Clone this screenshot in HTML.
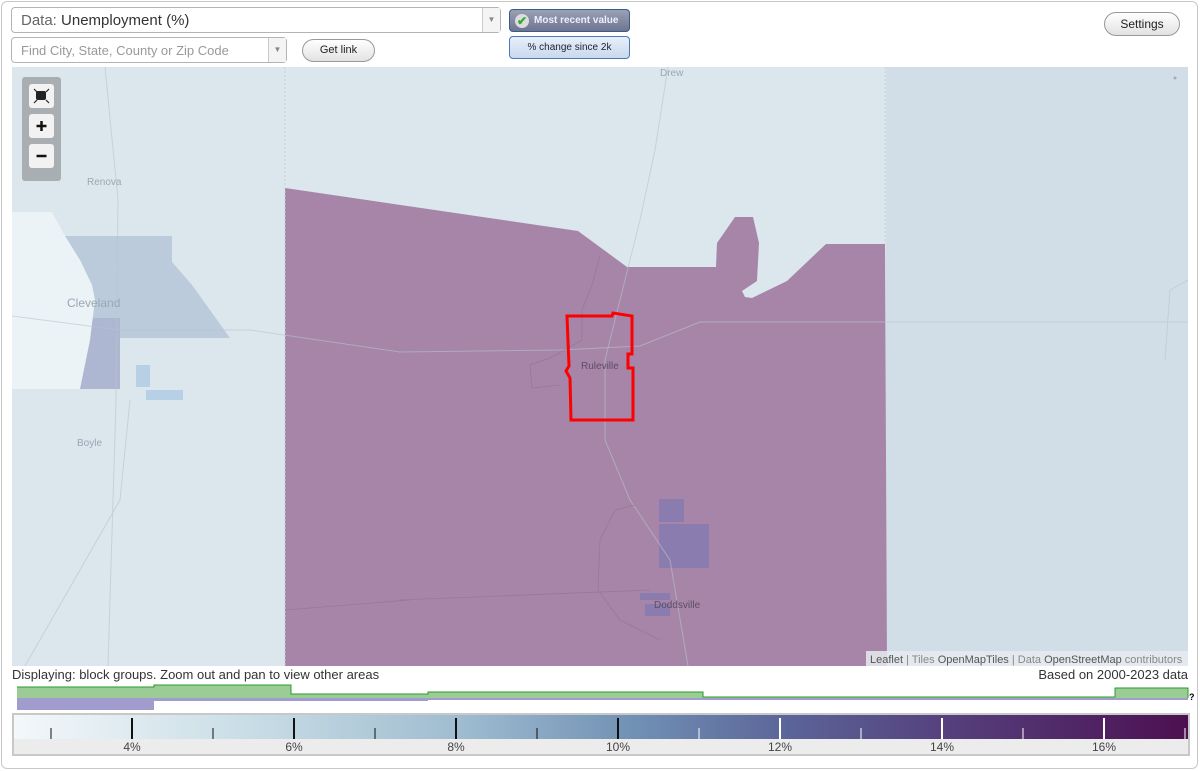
<!DOCTYPE html>
<html><head><meta charset="utf-8"><style>
*{box-sizing:border-box}
body{margin:0;width:1200px;height:771px;overflow:hidden;background:#fff;font-family:"Liberation Sans",Arial,sans-serif;position:relative}
.frame{position:absolute;left:1px;top:1px;width:1197px;height:768px;border:1px solid #c8c8c8;border-radius:6px}
.sel{position:absolute;border:1px solid #b4b4b4;border-radius:4px;background:#fff;color:#333}
.arr{position:absolute;right:0;top:0;bottom:0;width:18px;border-left:1px solid #ccc;background:#f4f4f4;color:#888;font-size:8px;text-align:center}
.btn{position:absolute;border:1px solid #999;border-radius:12px;background:linear-gradient(#fff,#e2e2e2);font-size:11px;color:#222;text-align:center}
.t{position:absolute;white-space:nowrap}
</style></head><body>
<div class="frame"></div>
<div class="sel" style="left:11px;top:7px;width:490px;height:26px;font-size:15px;padding:4px 0 0 9px"><span style="color:#666">Data:</span> Unemployment (%)<div class="arr" style="line-height:24px">▼</div></div>
<div class="sel" style="left:11px;top:37px;width:276px;height:26px;font-size:13px;padding:5px 0 0 9px;color:#999">Find City, State, County or Zip Code<div class="arr" style="line-height:24px">▼</div></div>
<div class="btn" style="left:302px;top:39px;width:73px;height:23px;line-height:21px">Get link</div>
<div style="position:absolute;left:509px;top:9px;width:121px;height:23px;border:1px solid #3c5a8a;border-radius:4px;background:linear-gradient(#9aa0b4,#6e7590);color:#eef;font-size:10px;font-weight:bold;line-height:21px;padding-left:24px">Most recent value<span style="position:absolute;left:5px;top:4px;width:14px;height:14px;border-radius:7px;background:#ddd;color:#3a3;font-size:12px;line-height:14px;text-align:center">✔</span></div>
<div style="position:absolute;left:509px;top:36px;width:121px;height:23px;border:1px solid #4a78b8;border-radius:4px;background:linear-gradient(#e8f0fa,#c8d8ee);color:#223;font-size:10px;line-height:21px;text-align:center">% change since 2k</div>
<div class="btn" style="left:1104px;top:12px;width:76px;height:24px;line-height:22px;font-size:12px">Settings</div>

<svg style="position:absolute;left:12px;top:67px" width="1176" height="599" viewBox="12 67 1176 599">
<rect x="12" y="67" width="1176" height="599" fill="#dbe6ed"/>
<rect x="886" y="67" width="302" height="599" fill="#d1dee8"/>
<polygon points="65,236 172,236 172,262 192,285 230,338 120,338 120,389 76,389 85,310" fill="#bccbdc"/>
<polygon points="85,318 120,318 120,389 77,389 80,350" fill="#aeb7d2"/>
<polygon points="12,212 52,212 65,236 80,260 92,285 95,300 90,340 80,389 12,389" fill="#ebf3f6"/>
<rect x="136" y="365" width="14" height="22" fill="#b7d0e6"/>
<rect x="146" y="390" width="37" height="10" fill="#b7d0e6"/>
<polygon points="285,188 578,231 627,267 716,267 717,243 735,217 753,217 759,243 757,281 742,291 745,297 752,298 787,281 826,244 885,244 887,666 285,666" fill="#a685a8"/>
<g fill="#8b7cb0"><rect x="659" y="499" width="25" height="23"/><rect x="659" y="524" width="50" height="44"/><rect x="640" y="593" width="30" height="7"/><rect x="645" y="604" width="25" height="12"/></g>
<g fill="none" stroke="#b8c3cd" stroke-width="1" opacity=".6">
<path d="M12,316 L120,330 L250,330 L400,352 L560,350 L640,346 L700,322 L886,322 L1188,322"/>
<path d="M105,67 L118,200 L116,400 L108,666"/>
<path d="M668,67 L655,150 L640,220 L620,300 L605,360 L605,440 L630,500 L670,560 L688,666"/>
<path d="M25,666 L120,500 L130,400"/>
<path d="M1188,280 L1170,290 L1165,360"/>
</g>
<g fill="none" stroke="#8f7090" stroke-width="0.8" opacity=".6">
<path d="M600,255 L592,285 L582,310 L582,340 L550,358 L530,365 L532,388 L560,385"/>
<path d="M635,505 L615,510 L600,540 L598,590 L620,620 L660,640"/>
<path d="M400,600 L650,590 M285,610 L410,600"/>
</g>
<line x1="285" y1="67" x2="285" y2="666" stroke="#c9cfd8" stroke-dasharray="2,2"/>
<line x1="885" y1="67" x2="885" y2="244" stroke="#c9cfd8" stroke-dasharray="2,2"/>
<polygon points="567,316 612,316 613,313 632,316 632,354 628,354 628,368 633,368 633,420 571,420 570,378 566,371 569,366" fill="none" stroke="#ff0000" stroke-width="3"/>
<g font-family="Liberation Sans,Arial,sans-serif" fill="#9aa7b4" font-size="10">
<text x="660" y="76">Drew</text><text x="87" y="185">Renova</text><text x="77" y="446">Boyle</text>
<text x="67" y="307" font-size="12">Cleveland</text>
<text x="581" y="369" fill="#5e4d66">Ruleville</text><text x="654" y="608" fill="#5e4d66">Doddsville</text>
</g>
<circle cx="1175" cy="78" r="1.5" fill="#aab"/>
<rect x="22" y="77" width="39" height="104" rx="3" fill="#a8aeb2"/>
<rect x="29" y="84" width="25" height="24" rx="3" fill="#f2f2f2"/>
<rect x="29" y="114" width="25" height="24" rx="3" fill="#f2f2f2"/>
<rect x="29" y="144" width="25" height="24" rx="3" fill="#f2f2f2"/>
<rect x="36" y="91" width="10" height="9" rx="2" fill="#222"/>
<path d="M34,89 l3,3 M49,89 l-3,3 M34,103 l3,-3 M49,103 l-3,-3" stroke="#222" stroke-width="1.2"/>
<path d="M41.5,121 v10 M36.5,126 h10" stroke="#111" stroke-width="2.5"/>
<path d="M36.5,156 h10" stroke="#111" stroke-width="2.5"/>
<rect x="866" y="651" width="322" height="15" fill="#e6ebef" opacity=".85"/>
<text x="870" y="663" font-size="11" fill="#888" font-family="Liberation Sans,Arial,sans-serif"><tspan fill="#555">Leaflet</tspan> | Tiles <tspan fill="#555">OpenMapTiles</tspan> | Data <tspan fill="#555">OpenStreetMap</tspan> contributors</text>
</svg>

<div class="t" style="left:12px;top:667px;font-size:13px;color:#333">Displaying: block groups. Zoom out and pan to view other areas</div>
<div class="t" style="right:12px;top:667px;font-size:13px;color:#333">Based on 2000-2023 data</div>
<svg style="position:absolute;left:0;top:680px" width="1200" height="32">
<g fill="#9ccc96"><rect x="17" y="7" width="137" height="11"/><rect x="154" y="5" width="137" height="13"/><rect x="291" y="14" width="137" height="4"/><rect x="428" y="12" width="275" height="6"/><rect x="703" y="17" width="412" height="1"/><rect x="1115" y="8" width="73" height="10"/></g>
<path d="M17,7 H154 V5 H291 V14 H428 V12 H703 V17 H1115 V8 H1188 V18" fill="none" stroke="#2a9a2a" stroke-width="1"/>
<g fill="#a09ccd"><rect x="17" y="18" width="137" height="12"/><rect x="154" y="18" width="137" height="3"/><rect x="291" y="18" width="137" height="3"/><rect x="428" y="18" width="760" height="2"/></g>
<text x="1189" y="20" font-size="9" font-weight="bold" font-family="Liberation Sans,Arial">?</text>
</svg>
<div style="position:absolute;left:12px;top:713px;width:1178px;height:43px;border:2px solid #c8c8c8;background:#ececec"></div>
<div style="position:absolute;left:14px;top:715px;width:1174px;height:24px;background:linear-gradient(90deg,#f3f8fa 0%,#c9dde6 20%,#9fbcd0 38%,#7090b4 53%,#5b6498 66%,#553f7c 80%,#4c1050 100%)"></div>
<svg style="position:absolute;left:0;top:715px" width="1200" height="40">
<g stroke="#111" stroke-width="2"><path d="M132,3 V24 M294,3 V24 M456,3 V24 M618,3 V24"/></g>
<g stroke="#111" stroke-width="1"><path d="M51,13 V24 M213,13 V24 M375,13 V24 M537,13 V24"/></g>
<g stroke="#fff" stroke-width="2"><path d="M780,3 V24 M942,3 V24 M1104,3 V24"/></g>
<g stroke="#fff" stroke-width="1"><path d="M699,13 V24 M861,13 V24 M1023,13 V24 M1185,13 V24"/></g>
<g font-size="12" fill="#444" font-family="Liberation Sans,Arial" text-anchor="middle">
<text x="132" y="36">4%</text><text x="294" y="36">6%</text><text x="456" y="36">8%</text><text x="618" y="36">10%</text><text x="780" y="36">12%</text><text x="942" y="36">14%</text><text x="1104" y="36">16%</text></g>
</svg>
</body></html>
